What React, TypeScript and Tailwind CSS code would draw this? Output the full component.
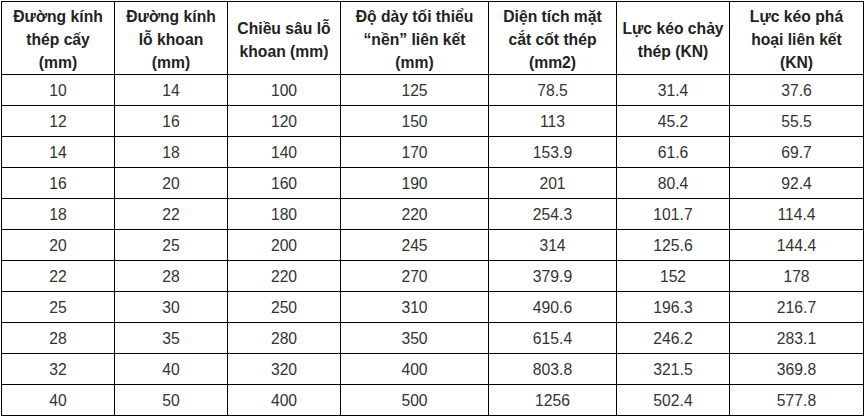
import React from "react";

const headers: string[][] = [
  ["Đường kính", "thép cấy", "(mm)"],
  ["Đường kính", "lỗ khoan", "(mm)"],
  ["Chiều sâu lỗ", "khoan (mm)"],
  ["Độ dày tối thiểu", "“nền” liên kết", "(mm)"],
  ["Diện tích mặt", "cắt cốt thép", "(mm2)"],
  ["Lực kéo chảy", "thép (KN)"],
  ["Lực kéo phá", "hoại liên kết", "(KN)"],
];

const rows: string[][] = [
  ["10", "14", "100", "125", "78.5", "31.4", "37.6"],
  ["12", "16", "120", "150", "113", "45.2", "55.5"],
  ["14", "18", "140", "170", "153.9", "61.6", "69.7"],
  ["16", "20", "160", "190", "201", "80.4", "92.4"],
  ["18", "22", "180", "220", "254.3", "101.7", "114.4"],
  ["20", "25", "200", "245", "314", "125.6", "144.4"],
  ["22", "28", "220", "270", "379.9", "152", "178"],
  ["25", "30", "250", "310", "490.6", "196.3", "216.7"],
  ["28", "35", "280", "350", "615.4", "246.2", "283.1"],
  ["32", "40", "320", "400", "803.8", "321.5", "369.8"],
  ["40", "50", "400", "500", "1256", "502.4", "577.8"],
];

const widths = [113, 113, 113, 148, 128, 113, 134];

export default function App() {
  return (
    <div className="w-[866px] h-[416px] bg-white pl-px pt-px">
      <table
        className="table-fixed border-collapse w-[863px] text-[15.7px] text-[#333] text-center"
        style={{ fontFamily: '"Liberation Sans", Arial, sans-serif' }}
      >
        <colgroup>
          {widths.map((w, i) => (
            <col key={i} style={{ width: w }} />
          ))}
        </colgroup>
        <thead>
          <tr className="h-[72px]">
            {headers.map((h, i) => (
              <th
                key={i}
                className="border border-black font-bold leading-[23px] p-0 pt-[3px] align-middle text-[#222]"
              >
                {h.map((l, j) => (
                  <div key={j}>{l}</div>
                ))}
              </th>
            ))}
          </tr>
        </thead>
        <tbody>
          {rows.map((r, i) => (
            <tr key={i} className="h-[31px]">
              {r.map((c, j) => (
                <td key={j} className="border border-black p-0 pt-px leading-[20px] align-middle">
                  {c}
                </td>
              ))}
            </tr>
          ))}
        </tbody>
      </table>
    </div>
  );
}
